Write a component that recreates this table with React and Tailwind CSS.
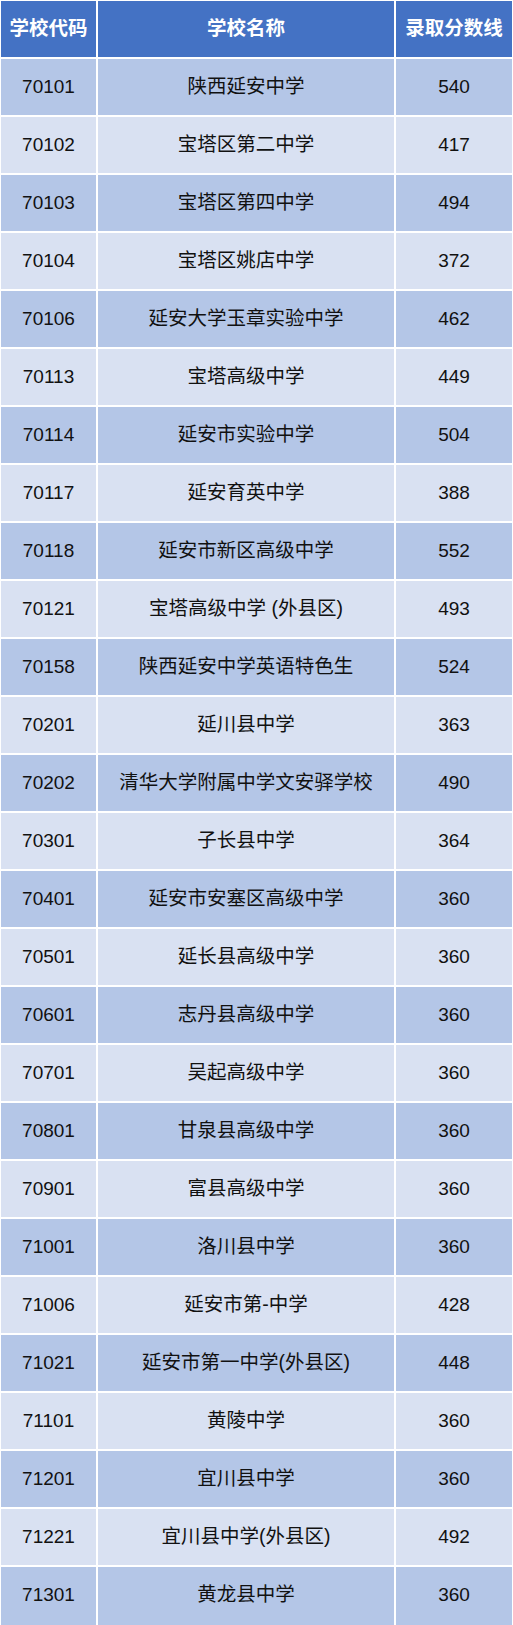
import React from 'react';

const rows = [
    ['70101', '陕西延安中学', '540'],
    ['70102', '宝塔区第二中学', '417'],
    ['70103', '宝塔区第四中学', '494'],
    ['70104', '宝塔区姚店中学', '372'],
    ['70106', '延安大学玉章实验中学', '462'],
    ['70113', '宝塔高级中学', '449'],
    ['70114', '延安市实验中学', '504'],
    ['70117', '延安育英中学', '388'],
    ['70118', '延安市新区高级中学', '552'],
    ['70121', '宝塔高级中学 (外县区)', '493'],
    ['70158', '陕西延安中学英语特色生', '524'],
    ['70201', '延川县中学', '363'],
    ['70202', '清华大学附属中学文安驿学校', '490'],
    ['70301', '子长县中学', '364'],
    ['70401', '延安市安塞区高级中学', '360'],
    ['70501', '延长县高级中学', '360'],
    ['70601', '志丹县高级中学', '360'],
    ['70701', '吴起高级中学', '360'],
    ['70801', '甘泉县高级中学', '360'],
    ['70901', '富县高级中学', '360'],
    ['71001', '洛川县中学', '360'],
    ['71006', '延安市第-中学', '428'],
    ['71021', '延安市第一中学(外县区)', '448'],
    ['71101', '黄陵中学', '360'],
    ['71201', '宜川县中学', '360'],
    ['71221', '宜川县中学(外县区)', '492'],
    ['71301', '黄龙县中学', '360'],
];

const font = { fontFamily: '"Liberation Sans", "Noto Sans CJK SC", sans-serif' };

const App = () => {
    return (
        <div className="w-[513px] bg-white pt-px px-px" style={font}>
            <div className="grid grid-cols-[95px_296px_116px] gap-[2px]">
                {/* header */}
                <div className="h-[56px] bg-[#4472c4] text-white font-bold text-[19.5px] flex items-center justify-center">学校代码</div>
                <div className="h-[56px] bg-[#4472c4] text-white font-bold text-[19.5px] flex items-center justify-center">学校名称</div>
                <div className="h-[56px] bg-[#4472c4] text-white font-bold text-[19.5px] flex items-center justify-center">录取分数线</div>

                {rows.map((row, index) => {
                    const bg = index % 2 === 0 ? 'bg-[#b4c6e7]' : 'bg-[#d9e1f2]';
                    // last row runs to the bottom edge
                    const h = index === rows.length - 1 ? 'h-[58px] pb-[2px]' : 'h-[56px]';
                    return (
                        <React.Fragment key={row[0]}>
                            <div className={`${h} ${bg} text-[#111] text-[19px] flex items-center justify-center`}>{row[0]}</div>
                            <div className={`${h} ${bg} text-[#111] text-[19.5px] flex items-center justify-center`}>{row[1]}</div>
                            <div className={`${h} ${bg} text-[#111] text-[19px] flex items-center justify-center`}>{row[2]}</div>
                        </React.Fragment>
                    );
                })}
            </div>
        </div>
    );
};

export default App;
